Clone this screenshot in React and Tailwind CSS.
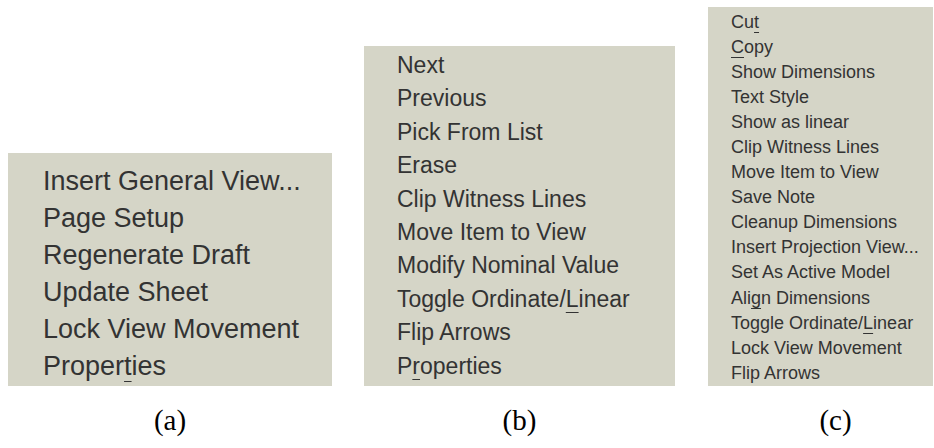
import React from "react";

const menuA = [
  "Insert General View...",
  "Page Setup",
  "Regenerate Draft",
  "Update Sheet",
  "Lock View Movement",
  ["Proper", "t", "ies"],
];

const menuB = [
  "Next",
  "Previous",
  "Pick From List",
  "Erase",
  "Clip Witness Lines",
  "Move Item to View",
  "Modify Nominal Value",
  ["Toggle Ordinate/", "L", "inear"],
  "Flip Arrows",
  ["P", "r", "operties"],
];

const menuC = [
  ["Cu", "t", ""],
  ["", "C", "opy"],
  "Show Dimensions",
  "Text Style",
  "Show as linear",
  "Clip Witness Lines",
  "Move Item to View",
  "Save Note",
  "Cleanup Dimensions",
  "Insert Projection View...",
  "Set As Active Model",
  ["Ali", "g", "n Dimensions"],
  ["Toggle Ordinate/", "L", "inear"],
  "Lock View Movement",
  "Flip Arrows",
];

function Item({ item, offset }) {
  if (typeof item === "string") return <div className="whitespace-nowrap">{item}</div>;
  const [pre, key, post] = item;
  return (
    <div className="whitespace-nowrap">
      {pre}
      <span className={`underline decoration-1 [text-decoration-skip-ink:none] ${offset}`}>{key}</span>
      {post}
    </div>
  );
}

function Menu({ items, className, offset }) {
  return (
    <div className={`bg-[#d5d5c7] text-[#333333] font-['Liberation_Sans',Arial,sans-serif] ${className}`}>
      {items.map((item, i) => (
        <Item key={i} item={item} offset={offset} />
      ))}
    </div>
  );
}

export default function App() {
  return (
    <div className="w-[934px] h-[448px] bg-white flex items-start pl-[8px]">
      <div className="flex flex-col items-center w-[324px]">
        <div className="h-[153px]" />
        <Menu
          items={menuA}
          className="w-[324px] h-[233px] pl-[35px] pt-[10px] text-[27px] leading-[37px]"
          offset="underline-offset-[6px]"
        />
        <div className="mt-[16px] font-['Liberation_Serif',serif] text-[29px] text-black leading-[36px]">(a)</div>
      </div>
      <div className="flex flex-col items-center w-[311px] ml-[32px]">
        <div className="h-[46px]" />
        <Menu
          items={menuB}
          className="w-[311px] h-[340px] pl-[33px] pt-[3px] text-[23px] leading-[33.4px]"
          offset="underline-offset-[5px]"
        />
        <div className="mt-[16px] font-['Liberation_Serif',serif] text-[29px] text-black leading-[36px]">(b)</div>
      </div>
      <div className="flex flex-col items-center w-[225px] ml-[33px]">
        <div className="h-[7px]" />
        <Menu
          items={menuC}
          className="w-[225px] h-[379px] pl-[23px] pt-[3px] text-[18px] leading-[25.05px]"
          offset="underline-offset-[4px]"
        />
        <div className="mt-[16px] pl-[30px] font-['Liberation_Serif',serif] text-[29px] text-black leading-[36px]">(c)</div>
      </div>
    </div>
  );
}
